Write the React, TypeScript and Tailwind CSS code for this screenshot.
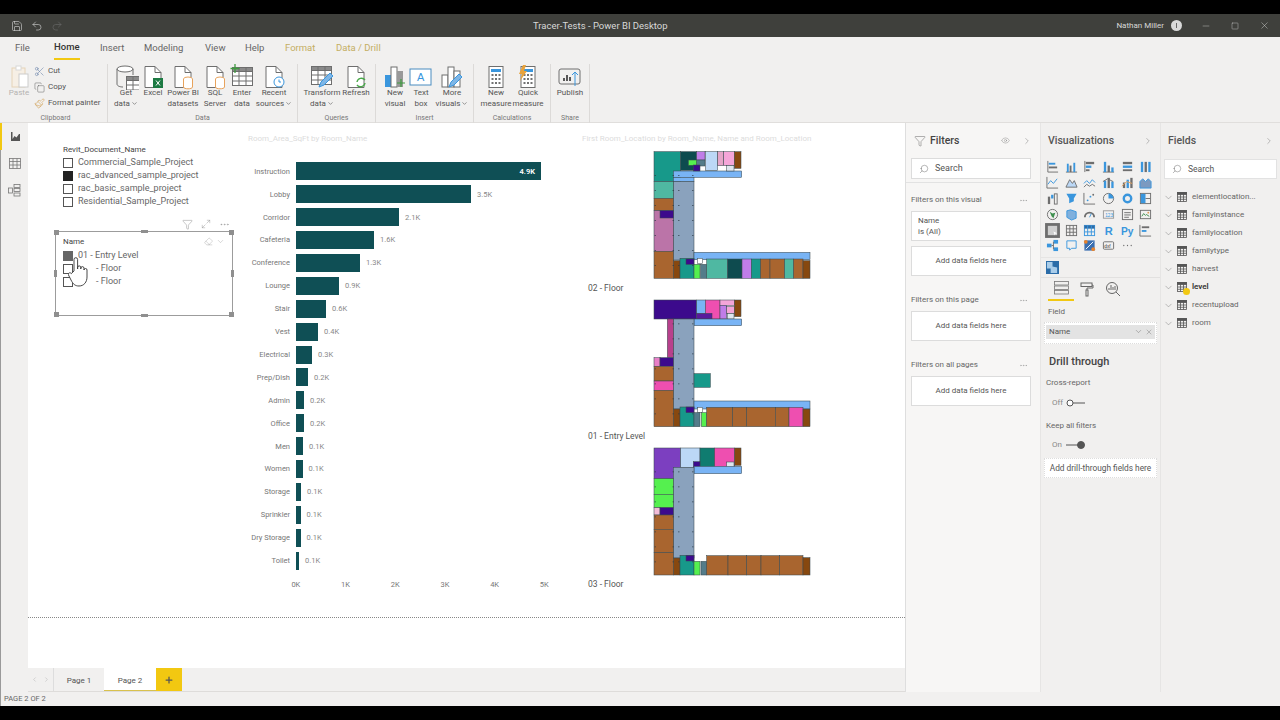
import React from 'react';
import { ChevronDown, ChevronRight, ChevronLeft, Search, Filter, Eye, X, Minus, Plus, Save, Undo2, Redo2, Scissors, Copy, Paintbrush, MoreHorizontal, Maximize2, Eraser, Square } from 'lucide-react';

const ln = '#6e6e6e';
const bl = '#3a96dd';

type R = [number, number, number, number, string];

const brown = '#a9652f';
const dbrown = '#87480f';
const teal = '#17998a';
const lteal = '#4fb8a2';
const dteal = '#0e4b4f';
const blue = '#79b4f5';
const lblue = '#bcd8f6';
const gray = '#8aa2bd';
const dpur = '#3c0a8c';
const pur = '#c07de8';
const pink = '#f5a5d8';
const hot = '#ee4fb0';
const green = '#55f04f';
const slate = '#547c8a';

const plan1: R[] = [
  [42,20,80,90,teal],[122,20,48,56,dteal],[170,20,25,25,pur],[170,45,25,18,slate],[145,45,25,16,green],[197,20,36,56,lblue],[233,20,18,42,'#e5a5c8'],[251,20,32,42,pink],[283,20,20,50,dbrown],
  [100,78,205,19,blue],[100,97,62,13,blue],[160,60,20,18,dpur],[260,62,22,16,'#dfe6ee'],
  [100,110,62,235,gray],[42,110,58,50,lteal],[42,160,58,37,brown],[42,197,58,122,'#bb74a8'],[60,197,40,22,dpur],[42,319,58,81,brown],[100,347,20,53,dbrown],
  [162,322,348,22,blue],[120,340,42,60,teal],[138,342,24,16,dpur],[172,340,16,16,'#ffffff'],[162,358,18,42,green],[182,358,18,42,slate],[200,342,63,58,lteal],[263,342,43,58,dteal],[306,342,28,58,pur],[334,342,28,58,teal],[362,342,28,58,brown],[390,342,44,58,brown],[434,342,27,58,lteal],[461,342,28,58,brown],[489,347,21,53,dbrown],
];
const plan2: R[] = [
  [42,15,128,57,dpur],[170,15,26,40,blue],[196,15,44,57,hot],[240,15,43,16,pink],[240,31,20,41,pur],[260,35,23,20,pink],[283,15,20,50,dbrown],[170,55,46,17,'#5a1a9c'],[262,56,20,16,'#dfe6ee'],
  [162,72,143,20,blue],[100,72,62,270,gray],[82,72,18,115,'#b8408c'],[42,188,18,26,'#e87fc8'],[60,188,40,26,dpur],[42,214,58,44,brown],[42,258,58,28,hot],[42,286,58,109,brown],[162,236,49,41,teal],
  [162,318,348,24,blue],[100,342,20,53,dbrown],[120,336,42,59,teal],[138,336,24,17,dpur],[173,337,15,16,'#ffffff'],[162,353,18,42,slate],[184,353,16,42,green],[200,337,78,58,brown],[278,337,42,58,brown],[320,337,86,58,brown],[406,337,41,58,brown],[447,337,42,58,hot],[489,342,21,53,dbrown],
];
const plan3: R[] = [
  [42,15,80,92,'#7c3fc0'],[122,15,58,58,lblue],[180,15,44,58,'#0f7c70'],[224,15,60,58,hot],[284,15,19,52,dbrown],[160,56,20,17,dpur],[260,57,22,16,'#dfe6ee'],
  [162,70,143,22,blue],[100,73,62,272,gray],[42,107,58,47,green],[42,154,58,40,green],[42,194,18,22,'#f3bcd8'],[60,194,40,22,dpur],[42,216,58,43,brown],[42,259,58,70,brown],[42,329,58,67,brown],
  [100,345,20,51,dbrown],[120,337,42,59,teal],[138,337,24,17,dpur],[162,355,18,41,green],[183,355,17,41,slate],[200,338,64,58,brown],[264,338,56,58,brown],[320,338,43,58,brown],[363,338,56,58,brown],[419,338,70,58,brown],[489,344,21,52,dbrown],
];

const FloorPlan = ({ rooms, top }: { rooms: R[]; top: number }) => {
  // little pillar marks, only where a room is under them
  const dots: [number, number][] = [];
  for (let y = top + 70; y < 390; y += 45) {
    for (const x of [44, 98, 115, 157]) {
      if (rooms.some((r) => x >= r[0] && x <= r[0] + r[2] && y >= r[1] && y <= r[1] + r[3])) dots.push([x, y]);
    }
  }
  return (
    <svg width="180" height="140" viewBox="0 0 540 420" className="shrink-0">
      {rooms.map((r, i) => (
        <rect key={i} x={r[0]} y={r[1]} width={r[2]} height={r[3]} fill={r[4]} stroke="#3a4a4f" strokeWidth="1.6" />
      ))}
      {dots.map(([x, y]) => (
        <rect key={`${x}-${y}`} x={x} y={y} width="3" height="3" fill="#2c3a44" />
      ))}
    </svg>
  );
};

const bars: [string, number, string][] = [
  ['Instruction', 245, '4.9K'], ['Lobby', 175, '3.5K'], ['Corridor', 103, '2.1K'], ['Cafeteria', 78, '1.6K'], ['Conference', 64, '1.3K'], ['Lounge', 43, '0.9K'],
  ['Stair', 30, '0.6K'], ['Vest', 22, '0.4K'], ['Electrical', 16, '0.3K'], ['Prep/Dish', 12, '0.2K'], ['Admin', 8, '0.2K'], ['Office', 8, '0.2K'],
  ['Men', 7, '0.1K'], ['Women', 6.5, '0.1K'], ['Storage', 5, '0.1K'], ['Sprinkler', 4.5, '0.1K'], ['Dry Storage', 4.5, '0.1K'], ['Toilet', 3, '0.1K'],
];

const Ico = ({ children, s = 26 }: { children: React.ReactNode; s?: number }) => (
  <svg width={s} height={s} viewBox="0 0 26 26" fill="none" stroke={ln} strokeWidth="1">{children}</svg>
);
const Doc = ({ children }: { children?: React.ReactNode }) => (
  <Ico>
    <path d="M5 2.5h10l6 6v15H5z" fill="#fff" />
    <path d="M15 2.5v6h6" />
    {children}
  </Ico>
);
const Cyl = () => (
  <g stroke="#e8a35c" fill="#fff">
    <ellipse cx="18" cy="15" rx="4.5" ry="2" />
    <path d="M13.5 15v8c0 2.4 9 2.4 9 0v-8" />
  </g>
);
const Tbl = ({ x = 3, y = 3 }: { x?: number; y?: number }) => (
  <g transform={`translate(${x} ${y})`}>
    <rect x=".5" y=".5" width="20" height="18" fill="#fff" />
    <rect x=".5" y=".5" width="20" height="4" fill="#8a8a8a" />
    <path d="M.5 9h20M.5 14h20M7 .5v18M14 .5v18" />
  </g>
);
const Calc = () => (
  <g>
    <rect x="6" y="2.5" width="14" height="21" fill="#fff" />
    <rect x="8" y="5" width="10" height="3" fill={bl} stroke="none" />
    <path d="M8.5 11h2M12 11h2M15.5 11h2M8.5 15h2M12 15h2M15.5 15h2M8.5 19h2M12 19h2M15.5 19h2" stroke="#444" strokeWidth="1.6" />
  </g>
);

const RB = ({ w, icon, lines, fade, caret }: { w: number; icon: React.ReactNode; lines: string[]; fade?: boolean; caret?: boolean }) => (
  <div className={`flex flex-col items-center shrink-0 text-[8px] leading-[11px] whitespace-nowrap ${fade ? 'text-[#b5b3b1]' : 'text-[#555]'}`} style={{ width: w }}>
    <div className="h-[23px] flex items-start justify-center">{icon}</div>
    {lines.map((l, i) => (
      <div key={l} className="flex items-center">
        {l}
        {caret && i === lines.length - 1 && <ChevronDown size={7} strokeWidth={2} className="ml-px" />}
      </div>
    ))}
  </div>
);

const Group = ({ w, label, children, pl = 0 }: { w: number; label: string; children: React.ReactNode; pl?: number }) => (
  <div className="flex flex-col shrink-0 border-r border-[#dcdad8] h-[59px]" style={{ width: w }}>
    <div className="flex flex-1" style={{ paddingLeft: pl }}>{children}</div>
    <div className="text-center text-[7px] leading-[10px] text-[#777]">{label}</div>
  </div>
);

const Check = ({ on, half }: { on?: boolean; half?: boolean }) => (
  <span className={`w-[10px] h-[10px] shrink-0 border ${on ? 'bg-[#222] border-[#222]' : half ? 'bg-[#666] border-[#666]' : 'bg-white border-[#555]'}`} />
);

const vizCells: React.ReactNode[] = [
  <><path d="M2 1v12h11" /><rect x="3" y="3" width="7" height="2" fill={bl} stroke="none" /><rect x="3" y="7" width="9" height="2" fill={ln} stroke="none" /></>,
  <><path d="M1 13h12" /><rect x="2" y="4" width="2" height="9" fill={bl} stroke="none" /><rect x="5" y="6" width="2" height="7" fill={ln} stroke="none" /><rect x="9" y="3" width="2" height="10" fill={bl} stroke="none" /></>,
  <><path d="M2 1v12" /><rect x="3" y="2" width="9" height="2.5" fill={ln} stroke="none" /><rect x="3" y="6" width="6" height="2.5" fill={bl} stroke="none" /><rect x="3" y="10" width="4" height="2" fill={ln} stroke="none" /></>,
  <><path d="M1 13h12" /><rect x="2" y="2" width="2.5" height="11" fill={bl} stroke="none" /><rect x="6" y="6" width="2.5" height="7" fill={ln} stroke="none" /><rect x="10" y="8" width="2.5" height="5" fill={bl} stroke="none" /></>,
  <><rect x="2" y="2" width="10" height="2.5" fill={ln} stroke="none" /><rect x="2" y="6" width="10" height="2.5" fill={bl} stroke="none" /><rect x="2" y="10" width="10" height="2" fill={ln} stroke="none" /></>,
  <><rect x="2" y="2" width="2.5" height="11" fill={bl} stroke="none" /><rect x="6" y="2" width="2.5" height="11" fill={ln} stroke="none" /><rect x="10" y="2" width="2.5" height="11" fill={bl} stroke="none" /></>,
  <><path d="M1 1v12h12" /><path d="M2 9l3-4 3 3 4-5" stroke={bl} /></>,
  <><path d="M1 12l4-8 3 4 2-3 3 7z" fill="#bcd8f6" stroke={ln} /></>,
  <><path d="M1 8l3-3 3 3 3-4 3 3" stroke={bl} /><path d="M1 12l3-3 3 2 3-2 3 2" /></>,
  <><rect x="2" y="5" width="2.5" height="8" fill={bl} stroke="none" /><rect x="6" y="2" width="2.5" height="11" fill={ln} stroke="none" /><rect x="10" y="6" width="2.5" height="7" fill={bl} stroke="none" /><path d="M1 6l5-3 6 3" /></>,
  <><rect x="2" y="7" width="2.5" height="6" fill={ln} stroke="none" /><rect x="6" y="4" width="2.5" height="9" fill={bl} stroke="none" /><rect x="10" y="2" width="2.5" height="11" fill={ln} stroke="none" /><path d="M1 11l5-5 6 2" stroke="#e8a35c" /></>,
  <><path d="M1 6l3-3 3 3 3-3 3 3v7H1z" fill="#7c9ac0" stroke={bl} /></>,
  <><rect x="2" y="5" width="2.5" height="8" fill={ln} stroke="none" /><rect x="5.5" y="3" width="2.5" height="4" fill={bl} stroke="none" /><rect x="9" y="2" width="3" height="11" fill="none" /></>,
  <><path d="M1.5 2h11l-3 5v3l-5 2V7z" fill={bl} stroke="none" /></>,
  <><path d="M1 1v12h12" /><circle cx="5" cy="9" r="1" fill={bl} stroke="none" /><circle cx="8" cy="5" r="1" fill={bl} stroke="none" /><circle cx="11" cy="3" r="1" fill={ln} stroke="none" /></>,
  <><circle cx="7" cy="7" r="5.5" /><path d="M7 7V1.5A5.5 5.5 0 0 1 12.5 7z" fill={bl} stroke="none" /></>,
  <><circle cx="7" cy="7" r="4" stroke={bl} strokeWidth="2.6" /></>,
  <><rect x="1.5" y="1.5" width="11" height="11" /><rect x="2" y="2" width="5" height="10" fill={bl} stroke="none" /><path d="M7 7h5" /></>,
  <><circle cx="7" cy="7" r="5.5" /><path d="M4 4l3 2 3-1-2 6-2-2z" fill="#3f8f4f" stroke="none" /></>,
  <><path d="M2 3l4-1 6 2v7l-5 2-5-3z" fill="#7fb0dd" stroke={bl} /></>,
  <><path d="M2 10a5 5 0 0 1 10 0" stroke={ln} strokeWidth="2" /><path d="M7 10l2-4" stroke={bl} /></>,
  <><rect x="1.5" y="3" width="11" height="8" stroke="#999" /><text x="3.5" y="9.5" fontSize="5" fill={bl} stroke="none" fontFamily="Liberation Sans">123</text></>,
  <><rect x="1.5" y="1.5" width="11" height="11" /><path d="M3.5 5h7M3.5 7.5h7M3.5 10h5" /></>,
  <><rect x="1.5" y="2.5" width="11" height="9" /><path d="M3 9l2-3 2 2 1-1 3 2" stroke="#3f8f4f" /><circle cx="10" cy="5" r="1" fill="#d95" stroke="none" /></>,
  <><rect x="-1" y="-1" width="16" height="16" fill="#6e6e6e" stroke="none" /><rect x="2" y="2" width="10" height="10" fill="#cfcfcf" stroke="none" /><path d="M8 8l4 2-2 .5-.5 2z" fill="#fff" stroke="none" /></>,
  <><rect x="1.5" y="1.5" width="11" height="11" /><path d="M1.5 5.2h11M1.5 8.9h11M5.2 1.5v11M8.9 1.5v11" /></>,
  <><rect x="1.5" y="1.5" width="11" height="11" stroke={bl} /><rect x="1.5" y="1.5" width="11" height="3.5" fill="#2b6ca8" stroke="none" /><path d="M1.5 8.5h11M5 1.5v11M9 1.5v11" stroke={bl} /></>,
  <><text x="3" y="12" fontSize="12" fontWeight="700" fill={bl} stroke="none" fontFamily="Liberation Sans">R</text></>,
  <><text x="0" y="11.5" fontSize="11" fontWeight="700" fill={bl} stroke="none" fontFamily="Liberation Sans">Py</text></>,
  <><path d="M1 1v12h12" /><rect x="3" y="2.5" width="8" height="2" fill={ln} stroke="none" /><rect x="3" y="6.5" width="5" height="2" fill={bl} stroke="none" /></>,
  <><rect x="1" y="5" width="5" height="4" fill={bl} stroke="none" /><rect x="8" y="1" width="5" height="4" fill={bl} stroke="none" /><rect x="8" y="9" width="5" height="4" fill={bl} stroke="none" /><path d="M6 7h2M8 3v8" /></>,
  <><path d="M2 2h10v8H7l-2 2v-2H2z" stroke={bl} /></>,
  <><rect x="1.5" y="1.5" width="11" height="11" fill="#3a6fb0" stroke="none" /><path d="M3 11l8-8" stroke="#fff" /><circle cx="11" cy="11" r="2" fill="#e8832c" stroke="none" /><circle cx="3" cy="3" r="2" fill="#e8832c" stroke="none" /></>,
  <><rect x="1.5" y="3" width="11" height="8" rx="1" /><text x="2.5" y="9.5" fontSize="5" fill="#333" stroke="none" fontFamily="Liberation Sans">dxf</text></>,
  <><path d="M3 7h.01M7 7h.01M11 7h.01" strokeWidth="1.4" strokeLinecap="round" /></>,
];

const FieldRow = ({ name, bold, badge }: { name: string; bold?: boolean; badge?: boolean }) => (
  <div className="flex items-center h-[18px]">
    <ChevronDown size={11} strokeWidth={1} className="text-[#777] mr-[3px] ml-[2px] shrink-0" />
    <div className="relative w-[10px] h-[10px] mr-[5px] shrink-0">
      <svg width="10" height="10" viewBox="0 0 10 10" fill="none" stroke="#555" strokeWidth=".8">
        <rect x=".5" y=".5" width="9" height="9" />
        <rect x=".5" y=".5" width="9" height="2" fill="#555" />
        <path d="M.5 5h9M.5 7.3h9M3.5.5v9M6.5.5v9" />
      </svg>
      {badge && <span className="absolute -right-[3px] -bottom-[3px] w-[7px] h-[7px] rounded-full bg-[#f2c811]" />}
    </div>
    <span className={`text-[8px] whitespace-nowrap ${bold ? 'font-semibold text-[#333]' : 'text-[#666]'}`}>{name}</span>
  </div>
);

const AddBox = ({ label }: { label?: string }) => (
  <div className="h-[30px] w-[120px] ml-[5px] bg-white border border-[#dcdcdc] flex items-center justify-center text-[8px] text-[#555]">
    {label ?? 'Add data fields here'}
  </div>
);

const FilterHead = ({ label }: { label: string }) => (
  <div className="flex items-center justify-between w-[120px] ml-[5px] text-[8px] text-[#666] h-[14px] mt-px -mb-px">
    {label}
    <MoreHorizontal size={9} strokeWidth={1} className="mr-[3px] text-[#888]" />
  </div>
);

const Handle = ({ className }: { className: string }) => <span className={`absolute bg-[#8f8f8f] ${className}`} />;

export default function App() {
  return (
    <div className="w-[1280px] h-[720px] bg-black flex flex-col overflow-hidden font-['Roboto',sans-serif] text-[#555]">
      <div className="h-[14px] shrink-0" />

      {/* title bar */}
      <div className="h-[23px] shrink-0 bg-[#3f403c] flex items-center text-[#d8d8d8] text-[8px]">
        <div className="w-[533px] flex items-center pl-[11px] gap-[8px]">
          <Save size={12} strokeWidth={1.2} />
          <Undo2 size={12} strokeWidth={1.2} />
          <Redo2 size={12} strokeWidth={1.2} className="text-[#6c6c6c]" />
        </div>
        <div className="whitespace-nowrap text-[9.5px] mt-px">Tracer-Tests - Power BI Desktop</div>
        <div className="ml-auto flex items-center">
          <span className="mt-px">Nathan Miller</span>
          <span className="w-[11px] h-[11px] rounded-full bg-[#d9d9d9] ml-[7px] flex items-center justify-center">
            <span className="w-px h-[5px] bg-[#666]" />
          </span>
          <Minus size={10} strokeWidth={1} className="ml-[19px]" />
          <Square size={8} strokeWidth={1.2} className="ml-[20px]" />
          <X size={11} strokeWidth={1} className="ml-[20px] mr-[10px]" />
        </div>
      </div>

      {/* ribbon tabs */}
      <div className="h-[23px] shrink-0 bg-[#f1f0ef] flex items-center text-[9.5px] text-[#666] pl-[15px]">
        <span className="w-[39px]">File</span>
        <span className="w-[46px]"><span className="inline-flex h-[23px] items-center border-b-2 border-[#f2c811] text-[#333] font-medium">Home</span></span>
        <span className="w-[44px]">Insert</span>
        <span className="w-[61px]">Modeling</span>
        <span className="w-[40px]">View</span>
        <span className="w-[40px]">Help</span>
        <span className="w-[51px] text-[#c4ae63]">Format</span>
        <span className="text-[#c4ae63]">Data / Drill</span>
      </div>

      {/* ribbon */}
      <div className="h-[63px] shrink-0 bg-[#f1f0ef] border-b border-[#e0dedc] flex items-start pt-1 pl-[4px]">
        <Group w={104} label="Clipboard">
          <RB w={30} fade lines={['Paste']} icon={
            <Ico><rect x="6" y="4" width="13" height="19" stroke="#e6d3b8" fill="#f6efe5" /><rect x="10" y="2" width="5" height="4" stroke="#d8d8d8" fill="#fff" /><rect x="13" y="10" width="9" height="13" stroke="#ccc" fill="#fff" /></Ico>
          } />
          <div className="flex flex-col text-[8px] text-[#555] pt-px gap-[4px] leading-[12px] whitespace-nowrap">
            <div className="flex items-center gap-[3px]"><Scissors size={11} strokeWidth={1} className="text-[#4a6a9a]" />Cut</div>
            <div className="flex items-center gap-[3px]"><Copy size={11} strokeWidth={1} />Copy</div>
            <div className="flex items-center gap-[3px]"><Paintbrush size={11} strokeWidth={1} className="text-[#c78a2c]" />Format painter</div>
          </div>
        </Group>
        <Group w={190} label="Data">
          <RB w={36} caret lines={['Get', 'data']} icon={
            <Ico><ellipse cx="12" cy="5" rx="8" ry="3" fill="#fff" /><path d="M4 5v15c0 2 3 3 6 3M20 5v6" /><Tbl x={13} y={12} /></Ico>
          } />
          <RB w={18} lines={['Excel']} icon={<Doc><rect x="13" y="14" width="10" height="10" fill="#1d7a43" stroke="none" /><path d="M16 16.5l4 5M20 16.5l-4 5" stroke="#fff" /></Doc>} />
          <RB w={42} lines={['Power BI', 'datasets']} icon={<Doc><Cyl /></Doc>} />
          <RB w={22} lines={['SQL', 'Server']} icon={<Doc><Cyl /></Doc>} />
          <RB w={32} lines={['Enter', 'data']} icon={<Ico><Tbl x={3} y={3} /><path d="M6 0v9M1.5 4.5h9" stroke="#3f9b3f" strokeWidth="1.3" /></Ico>} />
          <RB w={32} caret lines={['Recent', 'sources']} icon={<Doc><circle cx="18" cy="18" r="5" stroke={bl} fill="#fff" /><path d="M18 15.5V18h2" stroke={bl} /></Doc>} />
        </Group>
        <Group w={78} label="Queries" pl={6}>
          <RB w={36} caret lines={['Transform', 'data']} icon={<Ico><Tbl x={2} y={2} /><path d="M10 23l2-5 9-9 3 3-9 9z" fill="#7fb6e6" stroke={bl} /></Ico>} />
          <RB w={32} lines={['Refresh']} icon={<Doc><path d="M14 18a4.5 4.5 0 0 1 8-2M22 19a4.5 4.5 0 0 1-8 2" stroke="#4aa84a" strokeWidth="1.4" /></Doc>} />
        </Group>
        <Group w={98} label="Insert" pl={7}>
          <RB w={24} lines={['New', 'visual']} icon={<Ico><rect x="3" y="11" width="6" height="12" fill={bl} stroke="none" /><rect x="9" y="3" width="6" height="20" fill="#fff" /><rect x="15" y="7" width="6" height="16" fill="#999" stroke="none" /><path d="M19 15v8M15 19h8" stroke="#3f9b3f" strokeWidth="1.2" /></Ico>} />
          <RB w={28} lines={['Text', 'box']} icon={<Ico><rect x="2" y="5" width="21" height="16" stroke="#4a8cc0" fill="#fff" /><text x="9" y="17" fontSize="11" fill={bl} stroke="none" fontFamily="Liberation Sans">A</text></Ico>} />
          <RB w={34} caret lines={['More', 'visuals']} icon={<Ico><rect x="3" y="11" width="6" height="12" fill="#fff" /><rect x="9" y="3" width="6" height="20" fill="#fff" /><rect x="15" y="7" width="6" height="16" fill="#fff" /><path d="M10 23l2-5 8-8 3 3-8 8z" fill="#7fb6e6" stroke={bl} /></Ico>} />
        </Group>
        <Group w={77} label="Calculations" pl={5}>
          <RB w={34} lines={['New', 'measure']} icon={<Ico><Calc /></Ico>} />
          <RB w={30} lines={['Quick', 'measure']} icon={<Ico><Calc /><path d="M8 1l-4 9h3l-2 7 7-10H9l2-6z" fill="#e8a33c" stroke="none" /></Ico>} />
        </Group>
        <Group w={39} label="Share">
          <RB w={38} lines={['Publish']} icon={<Ico><rect x="2" y="5" width="21" height="15" rx="2" /><path d="M7 17v-3M10 17v-6M13 17v-4" stroke="#333" strokeWidth="1.6" /><path d="M18 22V8M15 11l3-3 3 3" stroke={bl} /></Ico>} />
        </Group>
      </div>

      {/* main */}
      <div className="flex-1 min-h-0 flex bg-[#f1f0ef]">
        {/* left rail */}
        <div className="w-[28px] shrink-0 border-l border-[#9a9a9a] flex flex-col">
          <div className="h-[27px] border-l-2 border-[#f2c811] -ml-px flex items-center justify-center pl-px">
            <svg width="11" height="11" viewBox="0 0 11 11" fill="#555"><path d="M1 1h1.5v7l2-3 2 1.5L9 3l1 0v7H1z" /></svg>
          </div>
          <div className="h-[27px] flex items-center justify-center">
            <svg width="12" height="11" viewBox="0 0 12 11" fill="none" stroke="#777" strokeWidth=".8"><rect x=".5" y=".5" width="11" height="10" /><path d="M.5 3.5h11M.5 7h11M4 .5v10M8 .5v10" /></svg>
          </div>
          <div className="h-[27px] flex items-center justify-center">
            <svg width="13" height="13" viewBox="0 0 13 13" fill="none" stroke="#777" strokeWidth=".8"><rect x="6" y=".5" width="6" height="3" /><rect x="6" y="4.5" width="6" height="3" /><rect x="6" y="9" width="6" height="3" /><rect x=".5" y="4" width="4" height="5" /></svg>
          </div>
        </div>

        {/* canvas + page tabs */}
        <div className="w-[877px] shrink-0 flex flex-col">
          <div className="h-[545px] bg-white flex relative">
            {/* slicers */}
            <div className="w-[220px] shrink-0 relative pt-[20px] pl-[35px] text-[9px]">
              <div className="text-[#444] text-[8px] leading-[13px]">Revit_Document_Name</div>
              <div className="flex flex-col text-[#666] leading-[13px]">
                {['Commercial_Sample_Project', 'rac_advanced_sample_project', 'rac_basic_sample_project', 'Residential_Sample_Project'].map((n, i) => (
                  <div key={n} className="flex items-center gap-[5px] h-[13px]"><Check on={i === 1} />{n}</div>
                ))}
              </div>
              <div className="mt-[9px] flex items-center justify-end gap-[8px] pr-[18px] h-[14px] text-[#888]">
                <Filter size={11} strokeWidth={1} />
                <Maximize2 size={10} strokeWidth={1} />
                <MoreHorizontal size={11} strokeWidth={1} />
              </div>
              <div className="-ml-[8px] w-[178px] h-[85px] border border-[#9c9c9c] relative pl-[7px] pt-[3px]">
                <Handle className="w-[5px] h-[5px] -left-[2px] -top-[2px]" />
                <Handle className="w-[5px] h-[5px] -right-[2px] -top-[2px]" />
                <Handle className="w-[5px] h-[5px] -left-[2px] -bottom-[2px]" />
                <Handle className="w-[5px] h-[5px] -right-[2px] -bottom-[2px]" />
                <Handle className="w-[7px] h-[3px] left-[85px] -top-[2px]" />
                <Handle className="w-[7px] h-[3px] left-[85px] -bottom-[2px]" />
                <Handle className="w-[3px] h-[7px] -left-[2px] top-[38px]" />
                <Handle className="w-[3px] h-[7px] -right-[2px] top-[38px]" />
                <div className="flex items-center justify-between text-[8px] text-[#444] h-[13px] pr-[7px]">
                  Name
                  <span className="flex items-center gap-[3px] text-[#999]"><Eraser size={9} strokeWidth={1} /><ChevronDown size={9} strokeWidth={1} /></span>
                </div>
                <div className="mt-[1px] flex flex-col text-[#666] leading-[13px]">
                  <div className="flex items-center gap-[5px] h-[13px]"><Check half />01 - Entry Level</div>
                  <div className="flex items-center h-[13px]"><Check /><span className="ml-[23px]">- Floor</span></div>
                  <div className="flex items-center h-[13px]"><Check /><span className="ml-[23px]">- Floor</span></div>
                </div>
                <svg width="22" height="32" viewBox="0 0 22 32" className="absolute left-[12px] top-[24px]" fill="#fff" stroke="#333" strokeWidth=".9" strokeLinejoin="round">
                  <path d="M6 15V3.5a1.8 1.8 0 0 1 3.6 0V13l0-1.5a1.6 1.6 0 0 1 3.2 0V13v-.8a1.6 1.6 0 0 1 3.2 0V14a1.5 1.5 0 0 1 3 0v7c0 5-3 9-8 9-4 0-6-2-8-6l-2.500-5c-.8-2 1.500-3 2.800-1.500z" />
                </svg>
              </div>
            </div>

            {/* bar chart */}
            <div className="w-[334px] shrink-0 pt-[10px] text-[7.5px] text-[#777]">
              <div className="text-[8px] leading-[12px] text-[#dcdcdc] whitespace-nowrap">Room_Area_SqFt by Room_Name</div>
              <div className="mt-[15px] flex flex-col">
                {bars.map(([name, w, v], i) => (
                  <div key={name} className="h-[22.9px] flex items-center">
                    <div className="w-[42px] text-right whitespace-nowrap">{name}</div>
                    <div className="h-[18px] ml-[6px] bg-[#0f4f55] flex items-center justify-end shrink-0" style={{ width: w }}>
                      {i === 0 && <span className="text-white font-semibold mr-[6px]">{v}</span>}
                    </div>
                    {i > 0 && <span className="ml-[6px] text-[#888]">{v}</span>}
                  </div>
                ))}
              </div>
              <div className="flex pl-[23px] mt-[7px]">
                {['0K', '1K', '2K', '3K', '4K', '5K'].map((t) => (
                  <div key={t} className="w-[49.7px] text-center">{t}</div>
                ))}
              </div>
            </div>

            {/* map */}
            <div className="w-[323px] shrink-0 pt-[10px]">
              <div className="text-[8px] leading-[12px] text-[#dcdcdc] whitespace-nowrap overflow-hidden">First Room_Location by Room_Name, Name and Room_Location</div>
              <div className="flex flex-col pl-[6px]">
                {[
                  { rooms: plan1, h: 'h-[150px]', label: '02 - Floor', top: 20 },
                  { rooms: plan2, h: 'h-[148px]', label: '01 - Entry Level', top: 15 },
                  { rooms: plan3, h: 'h-[148px]', label: '03 - Floor', top: 15 },
                ].map((p) => (
                  <div key={p.label} className={`${p.h} flex items-end`}>
                    <div className="w-[52px] shrink-0 text-[8.5px] leading-[12px] text-[#555] whitespace-nowrap mb-px">{p.label}</div>
                    <div className="self-start"><FloorPlan rooms={p.rooms} top={p.top} /></div>
                  </div>
                ))}
              </div>
            </div>

            <div className="absolute left-0 right-0 top-[494px] border-t border-dotted border-[#888]" />
          </div>

          {/* page tabs */}
          <div className="h-[24px] flex items-stretch text-[8px] border-b border-[#dedcda]">
            <div className="w-[26px] flex items-center justify-center gap-[5px] text-[#bbb] border-r border-[#ddd]">
              <ChevronLeft size={7} /><ChevronRight size={7} />
            </div>
            <div className="w-[50px] pt-[2px] flex items-center justify-center text-[#555]">Page 1</div>
            <div className="w-[52px] pt-[3px] flex items-center justify-center bg-white text-[#555] border-b border-[#d8c14e]">Page 2</div>
            <div className="w-[26px] flex items-center justify-center bg-[#f2c811] text-[#555]"><Plus size={10} strokeWidth={3} /></div>
          </div>
        </div>

        {/* filters */}
        <div className="w-[135px] shrink-0 bg-[#f7f6f5] border-l border-[#dedede] h-[569px] flex flex-col">
          <div className="h-[35px] flex items-center pl-[8px] pr-[8px] shrink-0">
            <Filter size={12} strokeWidth={1} className="text-[#666]" />
            <span className="ml-[4px] text-[10.5px] font-medium text-[#444]">Filters</span>
            <Eye size={9} strokeWidth={1} className="ml-auto text-[#777]" />
            <ChevronRight size={10} strokeWidth={1} className="ml-[12px] text-[#666]" />
          </div>
          <div className="h-[21px] w-[120px] ml-[5px] bg-white border border-[#dcdcdc] flex items-center pl-[7px] text-[9px] text-[#555] gap-[6px]">
            <Search size={10} strokeWidth={1} className="-scale-x-100" />Search
          </div>
          <div className="mt-[3px] border-t border-[#e2e2e2] pt-[9px] flex flex-col">
            <FilterHead label="Filters on this visual" />
            <div className="mt-[5px] h-[30px] w-[120px] ml-[5px] bg-white border border-[#dcdcdc] pl-[6px] pt-[3px] text-[8px] leading-[11px] text-[#555]">
              <div>Name</div><div>is (All)</div>
            </div>
            <div className="mt-[5px]"><AddBox /></div>
            <div className="mt-[16px]"><FilterHead label="Filters on this page" /></div>
            <div className="mt-[5px]"><AddBox /></div>
            <div className="mt-[16px]"><FilterHead label="Filters on all pages" /></div>
            <div className="mt-[5px]"><AddBox /></div>
          </div>
        </div>

        {/* visualizations */}
        <div className="w-[120px] shrink-0 flex flex-col border-l border-[#e6e5e4]">
          <div className="h-[35px] flex items-center justify-between pl-[7px] pr-[7px] shrink-0">
            <span className="text-[10.5px] font-medium text-[#555]">Visualizations</span>
            <ChevronRight size={10} strokeWidth={1} className="text-[#666]" />
          </div>
          <div className="grid grid-cols-[repeat(6,18.7px)] auto-rows-[15.8px] pl-[2px] pt-[1px]">
            {vizCells.map((c, i) => (
              <div key={i} className="flex items-center justify-center">
                <svg width="13" height="13" viewBox="0 0 14 14" fill="none" stroke={ln} strokeWidth="1" overflow="visible">{c}</svg>
              </div>
            ))}
          </div>
          <div className="mt-[3px] border-t border-[#e6e5e4] h-[20px] flex items-center pl-[5px]">
            <svg width="13" height="13" viewBox="0 0 14 14"><rect width="14" height="14" fill="#2b6ca8" /><path d="M1 1h6v5l5 1v6H5V8H1z" fill="#a9cdea" /></svg>
          </div>
          <div className="border-t border-[#e2e1e0] h-[24px] flex items-center pl-[7px]">
            <div className="w-[26px] h-[23px] border-b-2 border-[#f2c811] flex items-center justify-center">
              <svg width="15" height="14" viewBox="0 0 15 14" fill="none" stroke="#777" strokeWidth=".8"><rect x=".5" y=".5" width="14" height="3.500" /><rect x=".5" y="5" width="14" height="3.500" /><rect x=".5" y="9.500" width="14" height="3.500" /></svg>
            </div>
            <svg width="14" height="15" viewBox="0 0 14 15" fill="none" stroke="#666" strokeWidth="1" className="ml-[6px]"><rect x="1" y="1" width="11" height="3.500" /><path d="M12 3h1v3H7v2" /><rect x="6" y="8" width="2" height="6" /></svg>
            <svg width="16" height="16" viewBox="0 0 16 16" fill="none" stroke="#666" strokeWidth="1" className="ml-[11px]"><circle cx="7" cy="7" r="5.500" /><path d="M4 9V7M6 9V4M8 9V6M10 9V5M11 11l4 4" /></svg>
          </div>
          <div className="pl-[7px] mt-[5px] text-[8px] leading-[12px] text-[#666]">Field</div>
          <div className="mx-[3px] mt-[4px] h-[22px] border border-dotted border-[#ddd] bg-white px-[1px] pt-[2px]">
            <div className="h-[14px] bg-[#e3e3e3] flex items-center pl-[3px] pr-[2px] text-[8px] text-[#555]">
              Name
              <ChevronDown size={9} strokeWidth={1} className="ml-auto" />
              <X size={8} strokeWidth={1} className="ml-[2px]" />
            </div>
          </div>
          <div className="pl-[8px] mt-[11px] text-[11px] leading-[14px] font-medium text-[#444]">Drill through</div>
          <div className="pl-[5px] mt-[8px] text-[8px] leading-[12px] text-[#666]">Cross-report</div>
          <div className="pl-[11px] mt-[8px] flex items-center h-[12px] text-[8px] text-[#888]">
            Off
            <svg width="20" height="8" viewBox="0 0 20 8" className="ml-[3px]" fill="none" stroke="#555"><circle cx="4" cy="4" r="3" fill="#fff" /><path d="M7 4h12" /></svg>
          </div>
          <div className="pl-[5px] mt-[11px] text-[8px] leading-[12px] text-[#666]">Keep all filters</div>
          <div className="pl-[11px] mt-[7px] flex items-center h-[12px] text-[8px] text-[#888]">
            On
            <svg width="20" height="8" viewBox="0 0 20 8" className="ml-[3px]" fill="#555" stroke="#555"><path d="M1 4h12" /><circle cx="16" cy="4" r="3.500" /></svg>
          </div>
          <div className="mx-[3px] mt-[7px] h-[20px] border border-dotted border-[#ddd] bg-white flex items-center justify-center text-[8.3px] text-[#555] whitespace-nowrap">
            Add drill-through fields here
          </div>
        </div>

        {/* fields */}
        <div className="w-[120px] shrink-0 flex flex-col border-l border-[#e6e5e4]">
          <div className="h-[35px] flex items-center justify-between pl-[7px] pr-[6px] shrink-0">
            <span className="text-[10.5px] font-medium text-[#555]">Fields</span>
            <ChevronRight size={10} strokeWidth={1} className="text-[#666]" />
          </div>
          <div className="h-[20px] mt-px ml-[3px] mr-[3px] bg-white border border-[#e2e2e2] flex items-center pl-[7px] gap-[6px] text-[8.5px] text-[#555]">
            <Search size={10} strokeWidth={1} className="-scale-x-100" />Search
          </div>
          <div className="mt-[9px] flex flex-col">
            <FieldRow name="elementlocation..." />
            <FieldRow name="familyinstance" />
            <FieldRow name="familylocation" />
            <FieldRow name="familytype" />
            <FieldRow name="harvest" />
            <FieldRow name="level" bold badge />
            <FieldRow name="recentupload" />
            <FieldRow name="room" />
          </div>
        </div>
      </div>

      {/* status bar */}
      <div className="h-[14px] shrink-0 bg-[#f1f0ef] border-l border-[#9a9a9a] pl-[3px] flex items-center text-[7.5px] text-[#666]">PAGE 2 OF 2</div>
      <div className="h-[14px] shrink-0" />
    </div>
  );
}
